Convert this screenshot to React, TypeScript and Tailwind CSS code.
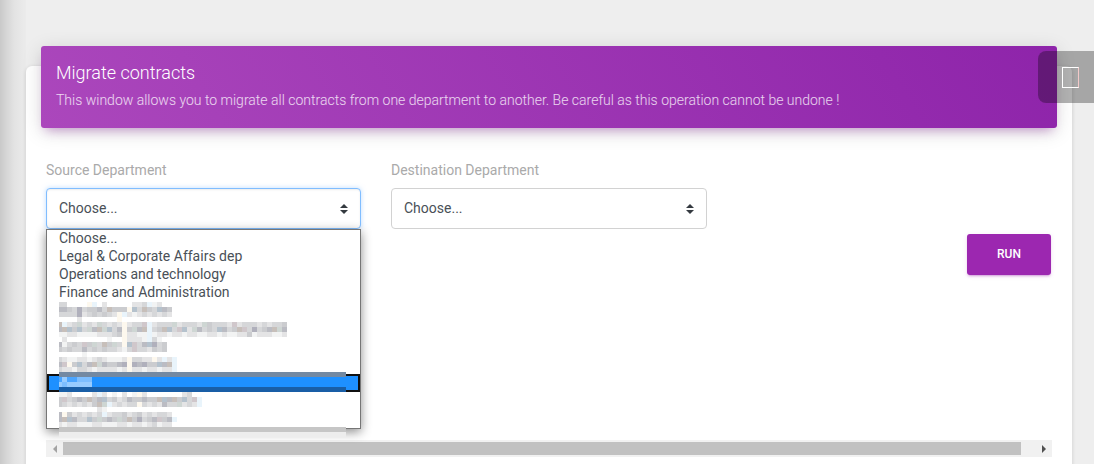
import React from "react";

const TONES: Record<string, string> = {
  a: "#f2f3f3",
  b: "#e4e4e5",
  c: "#d6d7d9",
  d: "#cbcccf",
  e: "#bbbcc3",
  f: "#b0b0bc",
  h: "#fdf8ee",
  i: "#e9f4fb",
  k: "#c7bfba",
  l: "#b5c2cd",
  m: "#ced6d3",
  p: "#d0c7cb",
  x: "#4ba5ff",
  y: "#7dbeff",
  z: "#98ccff",
};

const MOSAIC: string[] = [
  "cc....hi.b.....bbciab",
  "eedcfcddeckdddhlckdcled",
  "ccccfbcdcdcbhibabcbcbcb",
  "....b.......h",
  "kibcmbcbmcbcbhbccpibcccmbcccbmdcccbpbcccbcbccd",
  "ekldlcmekmlcehdmekicdklcplbmecdclecdkpcfcdekme",
  "aabbaaaabbbcdhbbaaiabbabbabbaabbabaabbdabbbaab",
  ".b........a..hbbbaica",
  "eacdcpdmckdmchlpcelfcd",
  "dcdccecdcdccbacpccbdcd",
  ".....a......",
  "cbaabbabcbaaabhccbbhbibi",
  "ephdlcekmeddefhfefddlekki".slice(0, 23) + "i",
  "cbbaccbabbbbabhbbabbabbi",
  "",
  "xzxxyyy",
  "zyzzzzz",
  "",
  "aab....bib.a.b.ahb.......bc",
  "dpcdedkdelcdbceddeddklekdlcpi",
  "dcbcbcbdkmibcbcchcbcbeccmbcbi",
  "........ba",
  "ehdbcbcbcibccdbcdbcbccb",
  "ekleccldmdedmdkdfcdepdei",
  "babbaaabbaaabbabbabcabb",
];

function ObscuredRows() {
  return (
    <svg
      className="pointer-events-none absolute left-[12px] top-[72px]"
      width="287"
      height="135"
      shapeRendering="crispEdges"
      aria-hidden="true"
    >
      <rect x="0" y="70" width="287" height="5" fill="#7389a2" />
      <rect x="0" y="85" width="287" height="5" fill="#195ea6" />
      <rect x="0" y="125" width="287" height="5" fill="#c6c6c6" />
      <rect x="0" y="130" width="287" height="5" fill="#ededed" />
      {MOSAIC.flatMap((row, r) =>
        row.split("").map((tone, c) =>
          tone === "." ? null : (
            <rect
              key={`${r}-${c}`}
              x={c === 0 ? 0 : c * 5 - 2}
              y={r * 5}
              width={c === 0 ? 3 : 5}
              height="5"
              fill={TONES[tone]}
            />
          ),
        ),
      )}
    </svg>
  );
}

function Carets() {
  return (
    <svg width="8" height="10" viewBox="0 0 4 5" aria-hidden="true">
      <path fill="#343a40" d="M2 0L0 2h4zm0 5L0 3h4z" />
    </svg>
  );
}

function SelectBox({ label, active, children }: { label: string; active?: boolean; children?: React.ReactNode }) {
  return (
    <div className={active ? "w-[315px]" : "w-[316px]"}>
      <div className="h-[28px] text-[14px] leading-[20px] text-[#aaaaaa]">{label}</div>
      <div className="relative">
        <div
          className={
            active
              ? "flex h-[41px] items-center justify-between rounded-[4px] border border-[#80bdff] bg-white pl-3 pr-3 shadow-[inset_0_1px_2px_rgba(0,0,0,0.075),0_0_5px_rgba(128,189,255,0.5)]"
              : "flex h-[41px] items-center justify-between rounded-[4px] border border-[#d2d2d2] bg-white pl-3 pr-3"
          }
        >
          <span className="pb-[2px] text-[14px] leading-[20px] text-[#495057]">Choose...</span>
          <Carets />
        </div>
        {children}
      </div>
    </div>
  );
}

function OptionList() {
  const options = ["Choose...", "Legal & Corporate Affairs dep", "Operations and technology", "Finance and Administration"];
  return (
    <div className="absolute left-0 top-[41px] z-10 h-[200px] w-[315px] border border-[#767676] bg-white shadow-[0_3px_10px_rgba(0,0,0,0.45)]">
      {options.map((option) => (
        <div key={option} className="h-[18px] pl-3 text-[14px] leading-[16px] text-[#495057]">
          {option}
        </div>
      ))}
      <div className="mt-[72px] h-[18px] border-2 border-[#101010] bg-[#1e90ff]" />
      <ObscuredRows />
    </div>
  );
}

export default function App() {
  return (
    <div className="relative h-[464px] w-[1094px] overflow-hidden bg-[#eeeeee] pl-[26px] pt-[66px] font-['Roboto',sans-serif]">
      <div className="absolute inset-y-0 left-0 w-[26px] bg-[linear-gradient(90deg,#c9c9c9_0%,#d6d6d6_25%,#e3e3e3_55%,#e9e9e9_85%,#ebebeb_100%)]" />
      <main className="relative h-[440px] w-[1046px] rounded-[6px] bg-white px-[15px] shadow-[0_1px_4px_rgba(0,0,0,0.14)]">
        <header className="relative -top-5 h-[82px] w-[1016px] rounded-[3px] bg-[linear-gradient(60deg,#ab47bc,#8e24aa)] px-[15px] pt-[14px] shadow-[0_4px_20px_rgba(0,0,0,0.14),0_7px_10px_-5px_rgba(156,39,176,0.4)]">
          <h4 className="text-[18px] font-light leading-[25px] text-white">Migrate contracts</h4>
          <p className="mt-[5px] text-[14px] font-light leading-[20px] text-white/80">
            This window allows you to migrate all contracts from one department to another. Be careful as this operation
            cannot be undone !
          </p>
        </header>
        <section className="ml-[5px] mt-[12px] flex h-[69px] gap-[30px]">
          <SelectBox label="Source Department" active>
            <OptionList />
          </SelectBox>
          <SelectBox label="Destination Department" />
        </section>
        <div className="mr-[6px] mt-[5px] flex justify-end">
          <button className="h-[41px] w-[84px] rounded-[3px] bg-[#9c27b0] pb-[2px] text-[12px] font-medium leading-[20px] text-white shadow-[0_2px_2px_rgba(156,39,176,0.14),0_3px_1px_-2px_rgba(156,39,176,0.2),0_1px_5px_rgba(156,39,176,0.12)]">
            RUN
          </button>
        </div>
        <div className="ml-[5px] mt-[165px] flex h-[17px] w-[1006px] items-center bg-[#f1f1f1]">
          <div className="flex w-[17px] justify-center">
            <svg width="4" height="8" aria-hidden="true">
              <path d="M4 0v8L0 4z" fill="#a3a3a3" />
            </svg>
          </div>
          <div className="h-[13px] w-[958px] bg-[#c1c1c1]" />
          <div className="ml-auto flex w-[17px] justify-center">
            <svg width="4" height="8" aria-hidden="true">
              <path d="M0 0v8l4-4z" fill="#505050" />
            </svg>
          </div>
        </div>
      </main>
      <div className="absolute right-0 top-[51px] z-20 flex h-[52px] w-[56px] items-center rounded-l-[8px] bg-black/30 pl-[24px]">
        <div className="h-[21px] w-[17px] border border-white border-r-[#f3c9c9]" />
      </div>
    </div>
  );
}
